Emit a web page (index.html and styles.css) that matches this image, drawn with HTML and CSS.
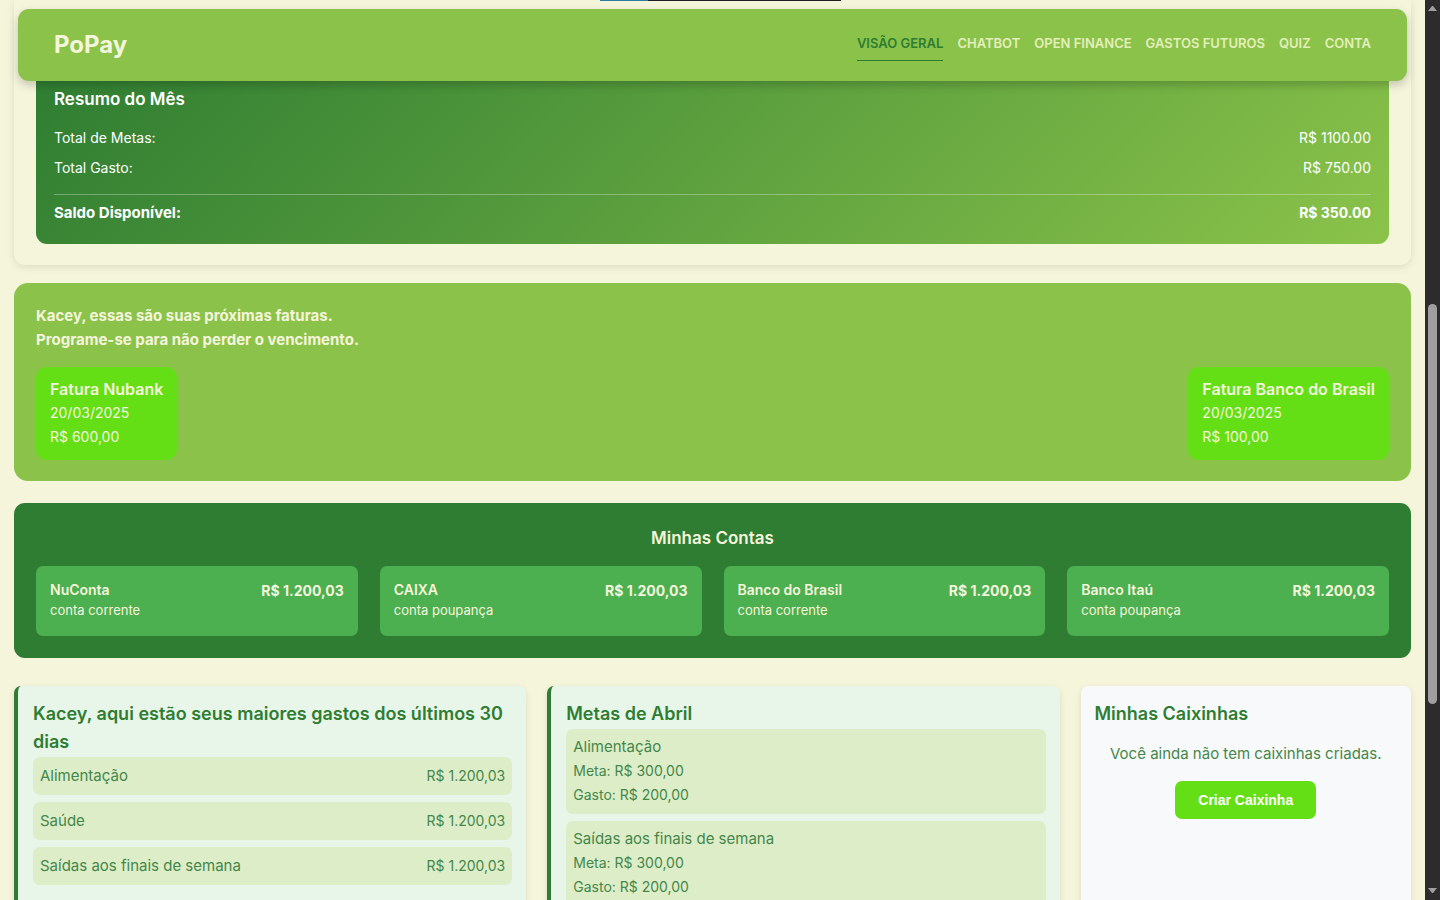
FILE: index.html
```html
<!DOCTYPE html>
<html lang="pt-BR">
<head>
<meta charset="utf-8">
<meta name="viewport" content="width=device-width, initial-scale=1">
<title>PoPay</title>
<link rel="stylesheet" href="styles.css">
</head>
<body>
<div class="shell">
  <div class="page">
    <header class="topbar">
      <div class="brand">PoPay</div>
      <nav class="menu">
        <a class="menu-link active" href="#">VISÃO GERAL</a>
        <a class="menu-link" href="#">CHATBOT</a>
        <a class="menu-link" href="#">OPEN FINANCE</a>
        <a class="menu-link" href="#">GASTOS FUTUROS</a>
        <a class="menu-link" href="#">QUIZ</a>
        <a class="menu-link" href="#">CONTA</a>
      </nav>
    </header>

    <main class="content">
      <section class="overview">
        <div class="summary">
          <h3 class="summary-title">Resumo do Mês</h3>
          <dl class="summary-list">
            <div class="summary-row"><dt>Total de Metas:</dt><dd>R$ 1100.00</dd></div>
            <div class="summary-row"><dt>Total Gasto:</dt><dd>R$ 750.00</dd></div>
            <div class="summary-row total"><dt>Saldo Disponível:</dt><dd>R$ 350.00</dd></div>
          </dl>
        </div>
      </section>

      <section class="bills">
        <p class="bills-intro">Kacey, essas são suas próximas faturas.<br>Programe-se para não perder o vencimento.</p>
        <div class="bills-list">
          <article class="bill"><h4>Fatura Nubank</h4><p>20/03/2025</p><p>R$ 600,00</p></article>
          <article class="bill"><h4>Fatura Banco do Brasil</h4><p>20/03/2025</p><p>R$ 100,00</p></article>
        </div>
      </section>

      <section class="accounts">
        <h3 class="accounts-title">Minhas Contas</h3>
        <div class="accounts-grid">
          <article class="account"><div><h4>NuConta</h4><p>conta corrente</p></div><strong>R$ 1.200,03</strong></article>
          <article class="account"><div><h4>CAIXA</h4><p>conta poupança</p></div><strong>R$ 1.200,03</strong></article>
          <article class="account"><div><h4>Banco do Brasil</h4><p>conta corrente</p></div><strong>R$ 1.200,03</strong></article>
          <article class="account"><div><h4>Banco Itaú</h4><p>conta poupança</p></div><strong>R$ 1.200,03</strong></article>
        </div>
      </section>

      <div class="panels">
        <section class="panel accent">
          <h3 class="panel-title">Kacey, aqui estão seus maiores gastos dos últimos 30 dias</h3>
          <ul class="items">
            <li class="item expense"><span class="item-name">Alimentação</span><span>R$ 1.200,03</span></li>
            <li class="item expense"><span class="item-name">Saúde</span><span>R$ 1.200,03</span></li>
            <li class="item expense"><span class="item-name">Saídas aos finais de semana</span><span>R$ 1.200,03</span></li>
          </ul>
        </section>
        <section class="panel accent">
          <h3 class="panel-title">Metas de Abril</h3>
          <ul class="items">
            <li class="item"><p class="item-name">Alimentação</p><p>Meta: R$ 300,00</p><p>Gasto: R$ 200,00</p></li>
            <li class="item"><p class="item-name">Saídas aos finais de semana</p><p>Meta: R$ 300,00</p><p>Gasto: R$ 200,00</p></li>
          </ul>
        </section>
        <section class="panel">
          <h3 class="panel-title">Minhas Caixinhas</h3>
          <div class="empty">
            <p>Você ainda não tem caixinhas criadas.</p>
            <button class="create" type="button">Criar Caixinha</button>
          </div>
        </section>
      </div>
    </main>
  </div>

  <div class="scrollbar" aria-hidden="true">
    <svg class="arrow" viewBox="0 0 9 5"><path d="M4 0h1L9 5H0z"/></svg>
    <div class="track"><div class="thumb"></div></div>
    <svg class="arrow" viewBox="0 0 9 5"><path d="M0 0h9L5 5H4z"/></svg>
  </div>
  <div class="load-strip" aria-hidden="true"></div>
</div>
</body>
</html>
```
FILE: styles.css
```css
* {
  box-sizing: border-box;
  margin: 0;
  padding: 0;
}

body {
  background: #f5f5dc;
  color: #2e7d32;
  font-family: Inter, "Open Sans", sans-serif;
  font-size: 14px;
  line-height: 24px;
}

ul {
  list-style: none;
}

.shell {
  position: relative;
  display: flex;
  height: 100vh;
  overflow: hidden;
}

.page {
  position: relative;
  flex: 1;
  min-width: 0;
}

/* Top bar, floating over the scrolled content */
.topbar {
  position: absolute;
  top: 9px;
  left: 18px;
  right: 18px;
  z-index: 2;
  display: flex;
  align-items: center;
  justify-content: space-between;
  padding: 18px 36px;
  background: #8bc34a;
  border-radius: 11px;
  box-shadow: 0 4px 10px rgba(0, 0, 0, 0.2);
}

.brand {
  color: #f5f5dc;
  font-size: 24px;
  font-weight: 700;
  line-height: 36px;
}

.menu {
  display: flex;
  gap: 14px;
}

.menu-link {
  padding: 4px 0 7px;
  border-bottom: 1px solid transparent;
  color: #e4eebb;
  font-size: 13px;
  font-weight: 600;
  line-height: 20px;
  text-decoration: none;
}

.menu-link.active {
  border-color: #2e7d32;
  color: #2e7d32;
}

.content {
  padding: 0 14px;
}

/* Month summary */
.overview {
  padding: 68px 22px 21px;
  border-radius: 0 0 11px 11px;
  box-shadow: 0 2px 8px rgba(0, 0, 0, 0.1);
}

.summary {
  padding: 18px 18px 19px;
  background: linear-gradient(135deg, #2e7d32, #8bc34a);
  border-radius: 11px;
  color: #fff;
}

.summary-title {
  margin-bottom: 14px;
  font-size: 17px;
  font-weight: 600;
  line-height: 26px;
}

.summary-row {
  display: flex;
  justify-content: space-between;
  margin-bottom: 6px;
}

.summary-row.total {
  margin: 14px 0 0;
  padding-top: 6px;
  border-top: 1px solid rgba(255, 255, 255, 0.3);
  font-weight: 700;
}

.summary-row.total dt {
  font-size: 15px;
}

/* Upcoming bills */
.bills {
  margin-top: 18px;
  padding: 21px 22px;
  background: #8bc34a;
  border-radius: 14px;
  color: #f5f5dc;
}

.bills-intro {
  margin-bottom: 15px;
  font-size: 15px;
  font-weight: 700;
}

.bills-list {
  display: flex;
  justify-content: space-between;
}

.bill {
  padding: 10px 14px 11px;
  background: #64df16;
  border-radius: 11px;
}

.bill h4 {
  font-size: 16px;
  font-weight: 600;
}

/* Bank accounts */
.accounts {
  margin-top: 22px;
  padding: 22px;
  background: #2e7d32;
  border-radius: 11px;
  color: #f5f5dc;
}

.accounts-title {
  margin-bottom: 14px;
  font-size: 17px;
  font-weight: 600;
  line-height: 27px;
  text-align: center;
}

.accounts-grid {
  display: grid;
  grid-template-columns: repeat(4, 1fr);
  gap: 22px;
}

.account {
  display: flex;
  justify-content: space-between;
  padding: 13px 14px 15px;
  background: #4caf50;
  border-radius: 7px;
  font-size: 13px;
  line-height: 21px;
}

.account h4 {
  font-size: 14px;
  font-weight: 600;
}

.account strong {
  font-size: 14px;
  line-height: 24px;
}

/* Bottom panels */
.panels {
  display: grid;
  grid-template-columns: 31fr 31fr 20fr;
  gap: 21px;
  margin-top: 28px;
}

.panel {
  min-height: 260px;
  padding: 14px;
  background: #f8f9fa;
  border-radius: 7px;
  box-shadow: 0 2px 6px rgba(0, 0, 0, 0.1);
}

.panel.accent {
  padding-left: 15px;
  background: #e8f5e9;
  border-left: 4px solid #2e7d32;
}

.panel-title {
  font-size: 18px;
  font-weight: 600;
  line-height: 28px;
}

.items {
  display: grid;
  gap: 7px;
  margin-top: 1px;
}

.item {
  padding: 6px 7px 7px;
  background: #dcedc8;
  border-radius: 7px;
  color: #44874a;
}

.item.expense {
  display: flex;
  justify-content: space-between;
}

.item-name {
  font-size: 15px;
}

.item.expense {
  padding: 7px;
}

.empty {
  padding: 14px 0;
  color: #44874a;
  font-size: 15px;
  text-align: center;
}

.create {
  margin-top: 15px;
  padding: 11px 23px;
  border: 0;
  border-radius: 7px;
  background: #64df16;
  color: #fff;
  font: bold 14px/16px "Liberation Sans", Arial, sans-serif;
}

/* Browser chrome */
.scrollbar {
  display: flex;
  flex-direction: column;
  align-items: center;
  width: 15px;
  padding: 6px 0 7px;
  background: #2c2c2c;
}

.arrow {
  width: 9px;
  height: 5px;
  fill: #9f9f9f;
}

.track {
  flex: 1;
  padding-top: 33vh;
}

.thumb {
  width: 9px;
  height: 400px;
  margin-top: -4px;
  border-radius: 5px;
  background: #9f9f9f;
}

.load-strip {
  position: absolute;
  top: 0;
  left: 50%;
  width: 241px;
  height: 1px;
  margin-left: -120px;
  background: linear-gradient(90deg, #2e7d9e 20%, #231f20 20%);
}
```
